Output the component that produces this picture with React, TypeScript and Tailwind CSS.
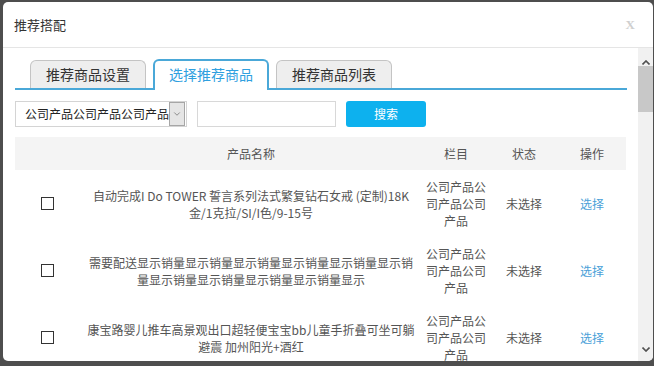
import { ChevronDown } from 'lucide-react'

const rows = [
  { name: '自动完成I Do TOWER 誓言系列法式繁复钻石女戒 (定制)18K金/1克拉/SI/I色/9-15号' },
  { name: '需要配送' + '显示销量'.repeat(10) + '显示' },
  { name: '康宝路婴儿推车高景观出口超轻便宝宝bb儿童手折叠可坐可躺避震 加州阳光+酒红' },
]

const tabs = ['推荐商品设置', '选择推荐商品', '推荐商品列表']

function Scrollbar() {
  return (
    <div className="flex w-[15px] flex-col bg-[#f1f1f1]">
      <div className="flex h-[17px] items-end justify-center">
        <svg width="8" height="5" viewBox="0 0 8 5"><path d="M0.5 4.5 L4 1 L7.5 4.5" fill="none" stroke="#505050" strokeWidth="1.6" /></svg>
      </div>
      <div className="mt-[1px] h-[46px] bg-[#c8c8c8]" />
      <div className="flex-1" />
      <div className="flex h-[14px] items-start justify-center">
        <svg width="8" height="5" viewBox="0 0 8 5"><path d="M0.5 0.5 L4 4 L7.5 0.5" fill="none" stroke="#505050" strokeWidth="1.6" /></svg>
      </div>
    </div>
  )
}

export default function App() {
  return (
    <div className="h-[366px] w-[654px] overflow-hidden bg-[#4e4e4e] pl-[3px] pt-[2px] font-['Noto_Sans_CJK_SC',sans-serif]">
      <div className="flex h-[359px] w-[650px] flex-col overflow-hidden rounded-[5px] bg-white">
        <div className="flex h-[46px] shrink-0 items-center justify-between border-b border-[#e5e5e5] pl-[11px] pr-[18px]">
          <span className="text-[13px] text-[#333]">推荐搭配</span>
          <span className="font-['Liberation_Serif',serif] text-[13px] font-bold text-[#cfcfcf]">X</span>
        </div>
        <div className="flex min-h-0 flex-1">
          <div className="min-w-0 flex-1 overflow-hidden pl-[12px] pr-[11px] pt-[11px]">
            <div className="flex items-end gap-[7px] border-b-2 border-[#4aa8d8] pl-[15px]">
              {tabs.map((tab, i) =>
                i === 1 ? (
                  <div key={tab} className="-mb-[2px] flex h-[31px] w-[116px] items-center justify-center rounded-t-[6px] border-2 border-b-0 border-[#4aa8d8] bg-white pb-[2px] text-[14px] text-[#2fa0df]">{tab}</div>
                ) : (
                  <div key={tab} className="flex h-[28px] w-[116px] items-center justify-center rounded-t-[6px] border border-b-0 border-[#c4c4c4] bg-[#eeeeee] text-[14px] text-[#333]">{tab}</div>
                )
              )}
            </div>
            <div className="mt-[11px] flex h-[26px] gap-[10px]">
              <div className="flex w-[172px] items-center justify-between border border-[#d4d4d4] pl-[9px] pr-[1px] text-[12px] text-[#222]">
                <span className="whitespace-nowrap">公司产品公司产品公司产品</span>
                <span className="flex h-[24px] w-[16px] items-center justify-center border border-[#a6a6a6] bg-[#e5e5e5]"><ChevronDown size={10} strokeWidth={1.5} color="#555" /></span>
              </div>
              <input className="w-[139px] border border-[#d8d8d8] bg-white outline-none" />
              <button className="w-[80px] rounded-[3px] bg-[#0db1ee] text-[12px] text-white">搜索</button>
            </div>
            <table className="mt-[10px] w-[611px] table-fixed border-collapse text-[12px] text-[#555]">
              <colgroup>
                <col className="w-[65px]" />
                <col className="w-[342px]" />
                <col className="w-[68px]" />
                <col className="w-[68px]" />
                <col className="w-[68px]" />
              </colgroup>
              <thead>
                <tr className="h-[33px] bg-[#f4f4f4]">
                  <th className="font-normal" />
                  <th className="font-normal">产品名称</th>
                  <th className="font-normal">栏目</th>
                  <th className="font-normal">状态</th>
                  <th className="font-normal">操作</th>
                </tr>
              </thead>
              <tbody>
                {rows.map((row) => (
                  <tr key={row.name} className="h-[67px] text-center leading-[17px]">
                    <td className="align-middle">
                      <div className="mx-auto h-[13px] w-[13px] border border-[#333] bg-white" />
                    </td>
                    <td className="py-[8px]">
                      <div className="mx-auto w-[328px]">{row.name}</div>
                    </td>
                    <td className="px-[4px] py-[8px]">公司产品公司产品公司产品</td>
                    <td>未选择</td>
                    <td className="text-[#4a9fd8]">选择</td>
                  </tr>
                ))}
              </tbody>
            </table>
          </div>
          <Scrollbar />
        </div>
      </div>
    </div>
  )
}
